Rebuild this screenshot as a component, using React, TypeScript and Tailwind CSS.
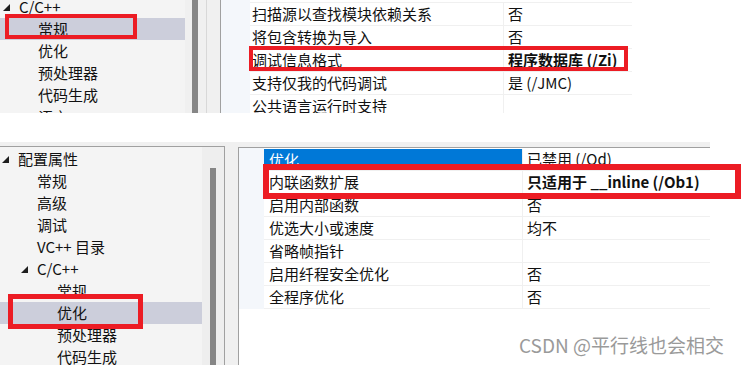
const font = { fontFamily: '"Noto Sans CJK SC", "Liberation Sans", sans-serif' };

function Tri() {
  return (
    <svg width="7" height="7" viewBox="0 0 7 7" className="shrink-0">
      <polygon points="7,0 7,7 0,7" fill="#1e1e1e" />
    </svg>
  );
}

type TreeItem = { label: string; indent: number; tri?: boolean; selected?: boolean };

function TreeRow({ item }: { item: TreeItem }) {
  return (
    <div
      className={`relative h-[22px] leading-[22px] whitespace-nowrap text-[15px] text-[#111] ${
        item.selected ? "bg-[#cccedb]" : ""
      }`}
      style={{ paddingLeft: item.indent }}
    >
      {item.tri && (
        <span className="absolute top-[8px]" style={{ left: item.indent - 16 }}>
          <Tri />
        </span>
      )}
      {item.label}
    </div>
  );
}

type Prop = { name: string; value: string; bold?: boolean; head?: boolean };

function PropRow({ p, nameW, padL }: { p: Prop; nameW: number; padL: number }) {
  return (
    <div className="flex h-[23px] border-b border-[#f0f0f0] text-[15px] leading-[22px] whitespace-nowrap">
      <div
        className={`shrink-0 border-r border-[#f0f0f0] overflow-hidden ${
          p.head ? "bg-[#0078d7] text-white mt-[1px] h-[21px] leading-[21px]" : "text-[#111]"
        }`}
        style={{ width: nameW, paddingLeft: padL }}
      >
        {p.name}
      </div>
      <div className={`flex-1 pl-[4px] text-[#111] ${p.bold ? "font-bold" : ""}`}>{p.value}</div>
    </div>
  );
}

const topTree: TreeItem[] = [
  { label: "C/C++", indent: 19, tri: true },
  { label: "常规", indent: 38, selected: true },
  { label: "优化", indent: 38 },
  { label: "预处理器", indent: 38 },
  { label: "代码生成", indent: 38 },
  { label: "语言", indent: 38 },
];

const topProps: Prop[] = [
  { name: "扫描源以查找模块依赖关系", value: "否" },
  { name: "将包含转换为导入", value: "否" },
  { name: "调试信息格式", value: "程序数据库 (/Zi)", bold: true },
  { name: "支持仅我的代码调试", value: "是 (/JMC)" },
  { name: "公共语言运行时支持", value: "" },
];

const bottomTree: TreeItem[] = [
  { label: "配置属性", indent: 18, tri: true },
  { label: "常规", indent: 37 },
  { label: "高级", indent: 37 },
  { label: "调试", indent: 37 },
  { label: "VC++ 目录", indent: 37 },
  { label: "C/C++", indent: 37, tri: true },
  { label: "常规", indent: 57 },
  { label: "优化", indent: 57, selected: true },
  { label: "预处理器", indent: 57 },
  { label: "代码生成", indent: 57 },
];

const bottomProps: Prop[] = [
  { name: "优化", value: "已禁用 (/Od)", head: true },
  { name: "内联函数扩展", value: "只适用于 __inline (/Ob1)", bold: true },
  { name: "启用内部函数", value: "否" },
  { name: "优选大小或速度", value: "均不" },
  { name: "省略帧指针", value: "" },
  { name: "启用纤程安全优化", value: "否" },
  { name: "全程序优化", value: "否" },
];

export default function App() {
  return (
    <div className="relative w-[745px] h-[365px] overflow-hidden bg-white" style={font}>
      {/* top screenshot */}
      <div className="flex h-[113px] overflow-hidden">
        <div className="w-[185px] shrink-0 bg-[#f4f4f4]">
          <div className="mt-[-4px]">
            {topTree.map((t, i) => (
              <TreeRow key={i} item={t} />
            ))}
          </div>
        </div>
        <div className="w-[21px] shrink-0 bg-[#f0f0f0] pl-[7px]">
          <div className="w-[6px] h-full bg-[#868686]" />
        </div>
        <div className="w-[14px] shrink-0 bg-[#f0f0f0] border-l border-[#d8d8d8]" />
        <div className="flex flex-1 bg-white border-l border-[#a0a0a0]">
          <div className="w-[29px] shrink-0 bg-[#f4f7fb]" />
          <div className="w-[382px] shrink-0">
            <div className="mt-[2px] border-t border-[#f0f0f0]">
              {topProps.map((p, i) => (
                <PropRow key={i} p={p} nameW={254} padL={2} />
              ))}
            </div>
          </div>
        </div>
      </div>

      <div className="h-[29px]" />

      {/* bottom screenshot */}
      <div className="w-[710px] h-[223px] bg-[#f0f0f0] pt-[4px] flex">
        <div className="w-[225px] shrink-0 flex border-t border-r border-[#a0a0a0]">
          <div className="w-[202px] shrink-0 bg-[#f4f4f4] pt-[1px]">
            {bottomTree.map((t, i) => (
              <TreeRow key={i} item={t} />
            ))}
          </div>
          <div className="flex-1 bg-[#eeeeee] pl-[8px] pt-[21px]">
            <div className="w-[6px] h-full bg-[#868686]" />
          </div>
        </div>
        <div className="w-[13px] shrink-0" />
        <div className="flex-1 mt-[1px] bg-white border-t border-l border-[#a0a0a0] flex items-start">
          <div className="w-[25px] h-[161px] shrink-0 bg-[#f4f7fb]" />
          <div className="flex-1">
            {bottomProps.map((p, i) => (
              <PropRow key={i} p={p} nameW={259} padL={5} />
            ))}
          </div>
        </div>
      </div>

      {/* annotation boxes */}
      <div className="absolute left-[5px] top-[14px] w-[132px] h-[25px] border-[4px] border-[#ec1c24]" />
      <div className="absolute left-[249px] top-[46px] w-[379px] h-[25px] border-[4px] border-[#ec1c24]" />
      <div className="absolute left-[8px] top-[294px] w-[135px] h-[35px] border-[5px] border-[#ec1c24]" />
      <div className="absolute left-[263px] top-[164px] w-[478px] h-[35px] border-[6px] border-[#ec1c24]" />

      <div className="absolute left-[519px] top-[332px] text-[19px] leading-[26px] text-[#9a9a9a] whitespace-nowrap">
        CSDN @平行线也会相交
      </div>
    </div>
  );
}
